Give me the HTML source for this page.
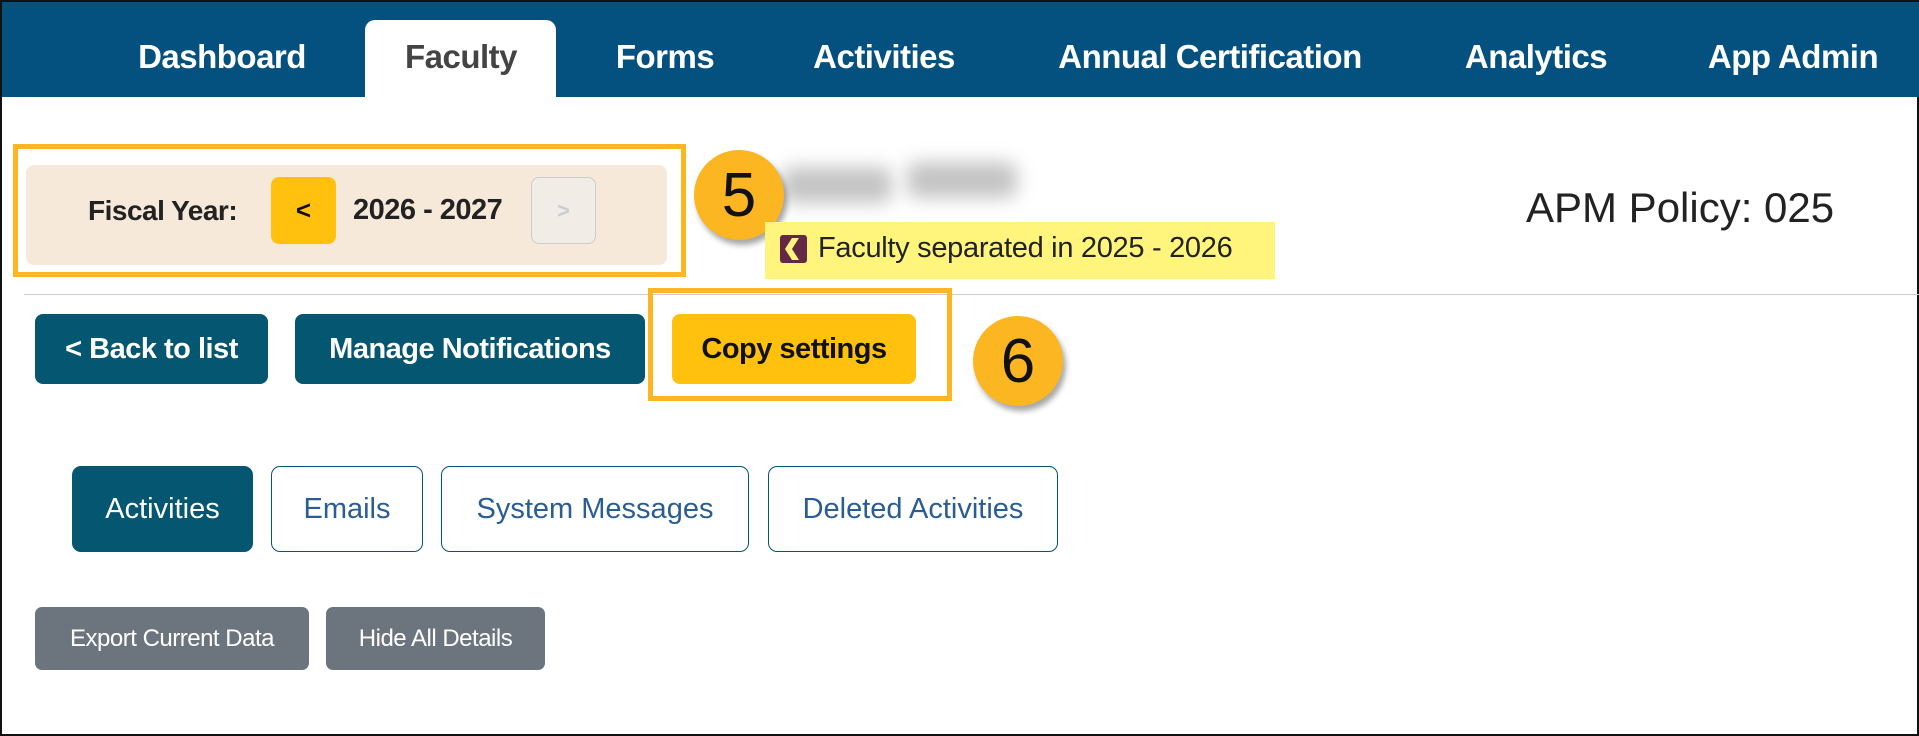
<!DOCTYPE html>
<html><head><style>
*{margin:0;padding:0;box-sizing:border-box}
body{width:1919px;height:736px;position:relative;overflow:hidden;background:#fff;font-family:"Liberation Sans",Arial,sans-serif;border:2px solid #111}
.a{position:absolute}
.nav{left:0;top:0;width:1919px;height:95px;background:#04517f}
.nt{position:absolute;top:0;height:95px;line-height:110px;color:#fff;font-weight:bold;font-size:33px;transform:translateX(-50%);white-space:nowrap;letter-spacing:-0.5px}
.tab{left:363px;top:18px;width:191px;height:78px;background:#fff;border-radius:10px 10px 0 0}
.btn{position:absolute;display:flex;align-items:center;justify-content:center;border-radius:8px;font-weight:bold;white-space:nowrap}
.circ{position:absolute;width:90px;height:90px;border-radius:50%;background:#fbb621;box-shadow:3px 5px 6px rgba(0,0,0,.35);font-size:62px;display:flex;align-items:center;justify-content:center;color:#111}
.pill{position:absolute;top:464px;height:86px;border:1.5px solid #055670;border-radius:9px;display:flex;align-items:center;justify-content:center;font-size:29px;color:#2a5d94}
.gb{position:absolute;top:605px;height:63px;background:#6c757d;color:#fff;border-radius:7px;display:flex;align-items:center;justify-content:center;font-size:24px;letter-spacing:-0.5px}
</style></head><body>
<div class="a nav"></div>
<div class="a tab"></div>
<div class="nt" style="left:220px">Dashboard</div>
<div class="nt" style="left:459px;color:#444">Faculty</div>
<div class="nt" style="left:663px">Forms</div>
<div class="nt" style="left:882px">Activities</div>
<div class="nt" style="left:1208px">Annual Certification</div>
<div class="nt" style="left:1534px">Analytics</div>
<div class="nt" style="left:1791px">App Admin</div>

<div class="a" style="left:11px;top:142px;width:673px;height:133px;border:5px solid #fbb621"></div>
<div class="a" style="left:24px;top:163px;width:641px;height:100px;background:#f7e9da;border-radius:8px"></div>
<div class="a" style="left:86px;top:193px;font-size:28px;font-weight:bold;color:#222;letter-spacing:-0.5px">Fiscal Year:</div>
<div class="btn" style="left:269px;top:175px;width:65px;height:67px;background:#ffc10e;font-size:26px;color:#111">&lt;</div>
<div class="a" style="left:351px;top:192px;font-size:29px;font-weight:bold;color:#222;letter-spacing:-0.5px">2026 - 2027</div>
<div class="btn" style="left:529px;top:175px;width:65px;height:67px;background:#f1ece6;border:1.5px solid #ccc;font-size:22px;color:#ccc">&gt;</div>

<div class="a" style="left:780px;top:165px;width:110px;height:36px;background:#c4c4c4;filter:blur(9px);border-radius:10px"></div>
<div class="a" style="left:905px;top:160px;width:110px;height:36px;background:#c4c4c4;filter:blur(9px);border-radius:10px"></div>
<div class="circ" style="left:692px;top:148px">5</div>

<div class="a" style="left:763px;top:220px;width:510px;height:57px;background:#fff57d"></div>
<svg class="a" style="left:778px;top:233px" width="27" height="28" viewBox="0 0 27 28"><rect width="27" height="28" rx="3" fill="#622845"/><path d="M19 3h-7L5 14l7 11h7l-7-11z" fill="#fff57d"/></svg>
<div class="a" style="left:816px;top:230px;font-size:29px;color:#222;letter-spacing:-0.3px">Faculty separated in 2025 - 2026</div>

<div class="a" style="left:1524px;top:182px;font-size:42px;color:#222">APM Policy: 025</div>

<div class="a" style="left:22px;top:292px;width:1897px;height:1px;background:#ccc"></div>

<div class="btn" style="left:33px;top:312px;width:233px;height:70px;background:#055670;color:#fff;font-size:29px;letter-spacing:-0.5px">&lt; Back to list</div>
<div class="btn" style="left:293px;top:312px;width:350px;height:70px;background:#055670;color:#fff;font-size:29px;letter-spacing:-0.5px">Manage Notifications</div>
<div class="a" style="left:646px;top:286px;width:304px;height:113px;border:5px solid #fbb621"></div>
<div class="btn" style="left:670px;top:312px;width:244px;height:70px;background:#ffc10e;color:#111;font-size:29px;letter-spacing:-0.5px">Copy settings</div>
<div class="circ" style="left:971px;top:314px">6</div>

<div class="pill" style="left:70px;width:181px;background:#055670;color:#fff">Activities</div>
<div class="pill" style="left:269px;width:152px">Emails</div>
<div class="pill" style="left:439px;width:308px">System Messages</div>
<div class="pill" style="left:766px;width:290px">Deleted Activities</div>

<div class="gb" style="left:33px;width:274px">Export Current Data</div>
<div class="gb" style="left:324px;width:219px">Hide All Details</div>
</body></html>
